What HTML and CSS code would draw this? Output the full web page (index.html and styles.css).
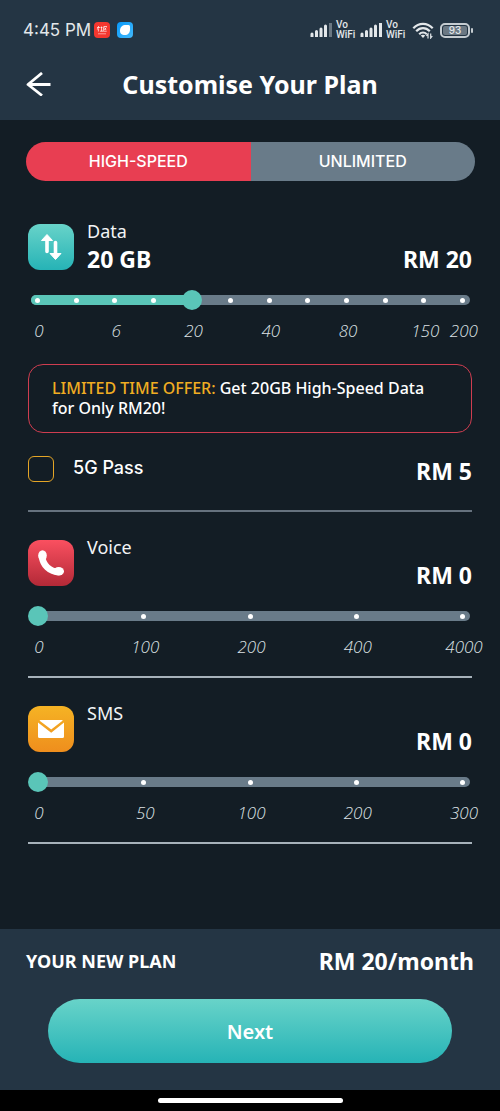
FILE: index.html
```html
<!DOCTYPE html>
<html lang="en">
<head>
<meta charset="utf-8">
<meta name="viewport" content="width=device-width, initial-scale=1">
<title>Customise Your Plan</title>
<link rel="stylesheet" href="styles.css">
</head>
<body>
<header class="top">
  <div class="status">
    <span class="clock">4:45 PM</span>
    <svg class="app-icon" viewBox="0 0 16 16" aria-hidden="true"><rect width="16" height="16" rx="4" fill="#f5372f"/><path d="M3 5.500h3M4.700 4 3.400 7.500M4.400 6.500v3M6.500 5.500H8.500M7.500 4.500v4.700M6 9.200h3M13 4.500H9.800L9.200 9.200h3.500M10.500 5.500l1.500 2.500M12.300 5.500l-2 2.500" stroke="#fff" stroke-width=".7" fill="none"/><path d="M4 11.800h8" stroke="#fbb" stroke-width=".8"/></svg>
    <svg class="app-icon second" viewBox="0 0 16 16" aria-hidden="true"><defs><linearGradient id="sky" x1="0" y1="0" x2="1" y2="1"><stop stop-color="#0899fa"/><stop offset="1" stop-color="#43b9fb"/></linearGradient></defs><rect width="16" height="16" rx="4" fill="url(#sky)"/><path d="M3 8.500C3 5 5.500 3 8.800 3H11.500q1.500 0 1.500 1.500v3C13 11 11 13 7.700 13 5 13 3 12 3 8.500z" fill="#fff"/></svg>
    <svg class="bars first-bars" viewBox="0 0 23 14" aria-hidden="true"><path d="M2 11v3M6.500 8.500V14M11 6v8M15.500 3v11" /><path class="dim" d="M20.500 0v14"/></svg>
    <span class="vowifi">Vo<br>WiFi</span>
    <svg class="bars" viewBox="0 0 23 14" aria-hidden="true"><path d="M2 11v3M6.500 8.500V14M11 6v8M15.500 3v11M20.500 0v14"/></svg>
    <span class="vowifi">Vo<br>WiFi</span>
    <svg class="wifi" viewBox="0 0 22 17" aria-hidden="true"><g fill="none" stroke="#e3e7ea" stroke-width="2.200"><path d="M1.300 6.300C6.800.4 15.200.4 20.700 6.300"/><path d="M4.200 9.300c4-4.200 9.600-4.200 13.600 0"/><path d="M7.200 12.200c2.300-2.300 5.300-2.300 7.600 0"/></g><path d="M8.700 13.500q2.300-1.700 4.600 0L11 16z" fill="#e3e7ea"/><path d="M16 16.500v-4.500l-1.600 2M18.700 11.500V16l1.600-2" fill="none" stroke="#e3e7ea" stroke-width="1.200"/></svg>
    <span class="battery"><span class="level">93</span></span>
  </div>
  <div class="title-bar">
    <button class="back" type="button" aria-label="Back"><svg viewBox="0 0 26 24" aria-hidden="true"><path d="M17 1 3 12.500l14 11M3 12.500H25.500" fill="none" stroke="#fff" stroke-width="2.800" stroke-linejoin="round"/></svg></button>
    <h1>Customise Your Plan</h1>
  </div>
</header>

<main class="plan">
  <div class="segments" role="group" aria-label="Plan type">
    <button class="segment active" type="button" aria-pressed="true">HIGH-SPEED</button>
    <button class="segment" type="button" aria-pressed="false">UNLIMITED</button>
  </div>

  <section class="option">
    <div class="option-head">
      <svg class="tile" viewBox="0 0 46 46" aria-hidden="true"><defs><linearGradient id="teal" x2="0" y2="1"><stop stop-color="#68d3c9"/><stop offset="1" stop-color="#26b3b6"/></linearGradient></defs><rect width="46" height="46" rx="12" fill="url(#teal)"/><path d="M19 27.500V15M27.500 18.500v13" stroke="#fff" stroke-width="3.600" stroke-linecap="round"/><path d="M19 10.500 24.500 16.500h-11zM27.500 35.500 22 29.500h11z" fill="#fff" stroke="#fff" stroke-width="1" stroke-linejoin="round"/></svg>
      <div class="names"><label class="name" for="data">Data</label><strong class="amount">20 GB</strong></div>
      <strong class="price">RM 20</strong>
    </div>
    <div class="slider">
      <div class="track"><div class="fill" style="width:36.36%"></div></div>
      <div class="dots"><i></i><i></i><i></i><i></i><i></i><i></i><i></i><i></i><i></i><i></i><i></i><i></i></div>
      <input id="data" type="range" min="0" max="11" value="4" aria-valuetext="20 GB">
    </div>
    <div class="scale twelve"><span>0</span><span></span><span>6</span><span></span><span>20</span><span></span><span>40</span><span></span><span>80</span><span></span><span>150</span><span>200</span></div>
    <p class="offer"><span class="offer-tag">LIMITED TIME OFFER:</span> Get 20GB High-Speed Data for Only RM20!</p>
    <div class="pass">
      <input class="check" id="pass" type="checkbox">
      <label for="pass">5G Pass</label>
      <strong class="price">RM 5</strong>
    </div>
  </section>

  <section class="option bright">
    <div class="option-head">
      <svg class="tile" viewBox="0 0 46 46" aria-hidden="true"><defs><linearGradient id="red" x2="0" y2="1"><stop stop-color="#fa5060"/><stop offset="1" stop-color="#b32937"/></linearGradient></defs><rect width="46" height="46" rx="12" fill="url(#red)"/><path d="M14 16.500C15 25 21.500 32 31 32" fill="none" stroke="#fff" stroke-width="6.500" stroke-linecap="round"/><ellipse cx="14.500" cy="15.500" rx="4.300" ry="5.300" fill="#fff"/><ellipse cx="30.700" cy="31.300" rx="5.300" ry="4.300" fill="#fff"/></svg>
      <div class="names"><label class="name" for="voice">Voice</label></div>
      <strong class="price">RM 0</strong>
    </div>
    <div class="slider">
      <div class="track"></div>
      <div class="dots"><i></i><i></i><i></i><i></i><i></i></div>
      <input id="voice" type="range" min="0" max="4" value="0">
    </div>
    <div class="scale"><span>0</span><span>100</span><span>200</span><span>400</span><span>4000</span></div>
  </section>

  <section class="option bright">
    <div class="option-head">
      <svg class="tile" viewBox="0 0 46 46" aria-hidden="true"><defs><linearGradient id="amber" x2="0" y2="1"><stop stop-color="#f5b324"/><stop offset="1" stop-color="#ef8e1d"/></linearGradient></defs><rect width="46" height="46" rx="12" fill="url(#amber)"/><path d="M12.500 14H34q1 0 .5.700L23.200 23.500 11.700 14.800q-.2-.8.800-.8z" fill="#fff"/><path d="M10 16.500 23.200 26.700 36 16.500V30.500q0 1.500-1.500 1.500h-23Q10 32 10 30.500z" fill="#fff"/></svg>
      <div class="names"><label class="name" for="sms">SMS</label></div>
      <strong class="price">RM 0</strong>
    </div>
    <div class="slider">
      <div class="track"></div>
      <div class="dots"><i></i><i></i><i></i><i></i><i></i></div>
      <input id="sms" type="range" min="0" max="4" value="0">
    </div>
    <div class="scale"><span>0</span><span>50</span><span>100</span><span>200</span><span>300</span></div>
  </section>
</main>

<footer class="summary">
  <div class="total"><span class="total-name">YOUR NEW PLAN</span><strong class="total-price">RM 20/month</strong></div>
  <button class="next" type="button">Next</button>
</footer>
<div class="home-bar"><span class="handle"></span></div>
</body>
</html>
```
FILE: styles.css
```css
* { box-sizing: border-box; }

body {
  margin: 0;
  min-height: 100vh;
  display: flex;
  flex-direction: column;
  background: #131d25;
  color: #fff;
  font-family: "Noto Sans", sans-serif;
}

button { border: 0; padding: 0; color: inherit; font: inherit; cursor: pointer; }

.top { height: 120px; background: #243544; }

.status {
  display: flex;
  align-items: center;
  height: 60px;
  padding: 0 30px 0 23px;
  color: #e3e7ea;
}
.clock { font: 17px/24px Inter, sans-serif; white-space: nowrap; }
.app-icon { width: 16px; height: 16px; margin-left: 3px; }
.app-icon.second { margin-left: 7px; }
.bars { width: 23px; height: 14px; margin-right: 3px; fill: none; stroke: #e3e7ea; stroke-width: 3; stroke-linecap: round; }
.first-bars { margin-left: auto; }
.bars .dim { stroke: #6b7883; }
.vowifi { width: 21px; margin-right: 3px; font: 500 10px/10px Roboto, sans-serif; white-space: nowrap; }
.wifi { width: 22px; height: 17px; margin: 0 6px 0 2px; }
.battery {
  display: flex;
  position: relative;
  width: 30px;
  height: 15px;
  padding: 1px;
  border: 2px solid #c5ccd1;
  border-radius: 5px;
}
.battery::after {
  content: "";
  position: absolute;
  left: 29px;
  top: 3px;
  width: 2px;
  height: 5px;
  border-radius: 1px;
  background: #c5ccd1;
}
.level { flex: 1; background: #6b7883; border-radius: 2px; font: 500 10px/9px Inter, sans-serif; text-align: center; }

.title-bar {
  display: grid;
  grid-template-columns: 26px 1fr 26px;
  align-items: center;
  height: 47px;
  padding: 0 25px;
}
.back { height: 24px; background: none; }
.back svg { display: block; width: 26px; height: 24px; }
h1 { margin: 0; font-size: 25px; line-height: 34px; font-weight: 700; text-align: center; }

.plan { flex: 1; padding: 22px 28px 40px; }

.segments {
  display: grid;
  grid-template-columns: 1fr 1fr;
  height: 39px;
  margin: 0 -3px 0 -2px;
  border-radius: 20px;
  overflow: hidden;
}
.segment { padding-bottom: 1px; background: #697b89; font: 500 16px/20px Inter, sans-serif; }
.segment.active { background: #e83e52; }

.option { border-bottom: 2px solid #66727e; }
.option.bright { border-bottom-color: #a7b2ba; }
.option-head { display: flex; height: 46px; margin-top: 28px; gap: 13px; }
.segments + .option .option-head { margin-top: 43px; }
.tile { flex: none; width: 46px; height: 46px; }
.names { flex: 1; display: flex; flex-direction: column; gap: 3px; margin-top: -5px; }
.name { font-size: 18px; line-height: 25px; color: #f2f4f5; }
.amount, .price, .total-price { font-size: 23px; line-height: 24px; font-weight: 700; white-space: nowrap; }
.option-head .price { margin-top: 23px; }

/* Track, stops and range input share one grid cell. */
.slider { display: grid; align-items: center; height: 20px; margin-top: 20px; }
.slider > * { grid-area: 1 / 1; }
.track { height: 10px; margin: 0 2px 0 3px; border-radius: 5px; background: #697b89; overflow: hidden; }
.fill { height: 100%; background: #5ac5b8; }
.dots { display: flex; justify-content: space-between; padding: 0 7px; }
.dots i { width: 5px; height: 5px; border-radius: 50%; background: #fff; }
.slider input { appearance: none; width: 100%; height: 20px; margin: 0; background: none; }
.slider input::-webkit-slider-runnable-track { height: 20px; background: none; }
.slider input::-webkit-slider-thumb { appearance: none; width: 20px; height: 20px; border-radius: 50%; background: #5ac5b8; }

.scale {
  display: grid;
  grid-template-columns: repeat(5, 38px);
  justify-content: space-between;
  margin: 10px -11px 18px -8px;
  font: italic 300 17px/22px "Open Sans", "Noto Sans", sans-serif;
  color: #dde1e4;
  text-align: center;
}
.scale.twelve { grid-template-columns: repeat(12, 38px); margin-bottom: 22px; }

.offer {
  margin: 0;
  padding: 13px 40px 14px 23px;
  border: 1px solid #cf3d50;
  border-radius: 15px;
  font: 500 16px/20px "Noto Sans", sans-serif;
}
.offer-tag { color: #f0ad22; }

.pass { display: flex; align-items: flex-start; height: 54px; margin-top: 23px; }
.check { appearance: none; width: 26px; height: 26px; margin: 0 19px 0 0; border: 1px solid #e5a526; border-radius: 6px; }
.check:checked { background: #e5a526; }
.pass label { flex: 1; font: 500 18px/24px Inter, sans-serif; }
.pass .price { margin-top: 3px; }

.summary { padding: 18px 26px 27px; background: #243544; }
.total { display: flex; justify-content: space-between; align-items: center; height: 28px; }
.total-name { font-size: 18px; line-height: 24px; font-weight: 700; }
.next {
  display: block;
  width: calc(100% - 44px);
  height: 64px;
  margin: 24px auto 0;
  border-radius: 32px;
  background: linear-gradient(#68d3c9, #26b3b6);
  font-size: 20px;
  font-weight: 600;
}

.home-bar { display: flex; justify-content: center; align-items: center; height: 21px; background: #000; }
.handle { width: 37%; height: 5px; border-radius: 3px; background: #fff; }
```
